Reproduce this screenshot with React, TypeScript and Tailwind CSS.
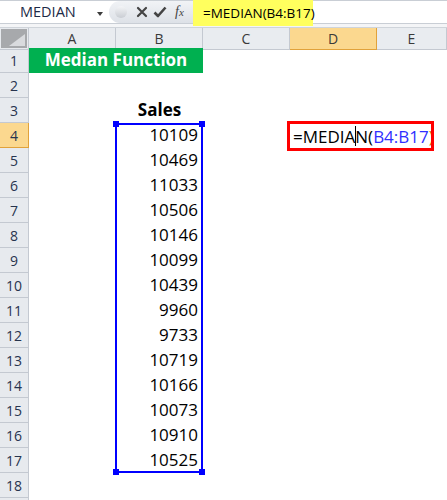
import React from "react";

const values = [10109, 10469, 11033, 10506, 10146, 10099, 10439, 9960, 9733, 10719, 10166, 10073, 10910, 10525];

function RowHeader({ n }: { n: number }) {
  const sel = n === 4;
  return (
    <div
      className={
        sel
          ? "flex items-center justify-center border-b border-r border-[#e1a23b] bg-[#fbd88f] text-[14px] text-[#27344e]"
          : "flex items-center justify-center border-b border-r border-[#c4c9d1] bg-[#e7eaee] text-[14px] text-[#27344e]"
      }
    >
      {n <= 18 ? n : ""}
    </div>
  );
}

export default function App() {
  const rows = Array.from({ length: 19 }, (_, i) => i + 1);
  const cols = ["A", "B", "C", "D", "E"];
  return (
    <div className="relative h-[500px] w-[447px] overflow-hidden bg-white font-['Open_Sans',sans-serif]">
      {/* Toolbar */}
      <div className="flex h-[24px] border-b border-t border-[#c9ced5] bg-white">
        <div className="relative flex w-[109px] items-center pl-[20px] text-[14.5px] text-[#1c2a47]">
          MEDIAN
          <div className="absolute right-[6px] top-[11px] h-0 w-0 border-l-[3.5px] border-r-[3.5px] border-t-[4px] border-l-transparent border-r-transparent border-t-[#3c3c3c]" />
        </div>
        <div className="flex w-[84px] items-center rounded-l-full bg-gradient-to-b from-[#f1f3f6] to-[#dde1e7] pl-[6px]">
          <div className="h-[12px] w-[12px] rounded-full bg-gradient-to-b from-[#f4f5f7] to-[#c9cdd3]" />
          <svg width="12" height="12" viewBox="0 0 12 12" className="ml-[9px]">
            <path d="M2 2 L10 10 M10 2 L2 10" stroke="#444" strokeWidth="2.2" strokeLinecap="round" />
          </svg>
          <svg width="14" height="12" viewBox="0 0 14 12" className="ml-[5px]">
            <path d="M1.5 6.5 L5 10 L12.5 1.5" stroke="#444" strokeWidth="2.6" fill="none" strokeLinejoin="round" />
          </svg>
          <span className="ml-[8px] font-['Liberation_Serif',serif] text-[14px] italic leading-none text-[#444]">
            f<span className="text-[11px]">x</span>
          </span>
        </div>
        <div className="flex-1" />
      </div>
      <div className="h-[4px] border-b border-[#cfd4da] bg-[#f4f5f7]" />

      {/* Formula highlight */}
      <div className="absolute left-[193px] top-0 flex h-[26px] w-[120px] items-center bg-[#ffff5e] pl-[10px] text-[13.5px] text-black">
        =MEDIAN(B4:B17)
      </div>

      {/* Column headers */}
      <div className="grid h-[20px] grid-cols-[29px_87px_87px_87px_87px_70px]">
        <div className="relative border-b border-r border-[#c4c9d1] bg-[#e7eaee] p-[1px]">
          <div className="relative h-full w-full bg-[#a7a9ac]">
            <div className="absolute bottom-[2px] right-[2px] h-0 w-0 border-b-[12px] border-l-[16px] border-b-[#d9dbde] border-l-transparent" />
          </div>
        </div>
        {cols.map((c) => (
          <div
            key={c}
            className={
              c === "D"
                ? "flex items-center justify-center border-b border-r border-[#e1a23b] bg-[#fbd88f] text-[14px] text-[#3a3a3a]"
                : "flex items-center justify-center border-b border-r border-[#c4c9d1] bg-[#e9ecf0] text-[14px] text-[#3a3a3a]"
            }
          >
            {c}
          </div>
        ))}
      </div>

      {/* Rows */}
      <div className="grid auto-rows-[25px] grid-cols-[29px_87px_87px_87px_87px_70px]">
        {rows.map((r) => (
          <React.Fragment key={r}>
            <RowHeader n={r} />
            {r === 1 ? (
              <div className="col-span-2 flex items-end justify-center bg-[#00b050] pb-[1px] text-[17px] font-bold text-white">
                Median Function
              </div>
            ) : (
              <>
                <div />
                <div
                  className={
                    r === 3
                      ? "flex items-end justify-center pb-[1px] text-[17px] font-bold text-black"
                      : "flex items-end justify-end pb-[1px] pr-[5px] text-[17px] text-black"
                  }
                >
                  {r === 3 ? "Sales" : r >= 4 && r <= 17 ? values[r - 4] : ""}
                </div>
              </>
            )}
            <div />
            <div />
            <div />
          </React.Fragment>
        ))}
      </div>

      {/* Blue range highlight */}
      <div className="absolute left-[115px] top-[123px] h-[350px] w-[88px] border-[2px] border-[#0000ff]" />
      <div className="absolute left-[113px] top-[121px] h-[6px] w-[6px] bg-[#0000ff]" />
      <div className="absolute left-[199px] top-[121px] h-[6px] w-[6px] bg-[#0000ff]" />
      <div className="absolute left-[113px] top-[469px] h-[6px] w-[6px] bg-[#0000ff]" />
      <div className="absolute left-[199px] top-[469px] h-[6px] w-[6px] bg-[#0000ff]" />

      {/* Cell editor with red annotation */}
      <div className="absolute left-[287px] top-[121px] h-[30px] w-[147px] overflow-hidden border-[3px] border-[#ff0000] bg-white">
        <div className="flex h-full items-center whitespace-nowrap pl-[3px] text-[17px] leading-none text-black">
          <span>=MEDIA</span>
          <span className="relative inline-block h-[20px] w-0">
            <span className="absolute left-0 top-0 h-[20px] w-px bg-black" />
          </span>
          <span>N(</span>
          <span className="text-[#2f2fff]">B4:B17</span>
          <span className="text-[#c66a00]">)</span>
        </div>
      </div>
    </div>
  );
}
